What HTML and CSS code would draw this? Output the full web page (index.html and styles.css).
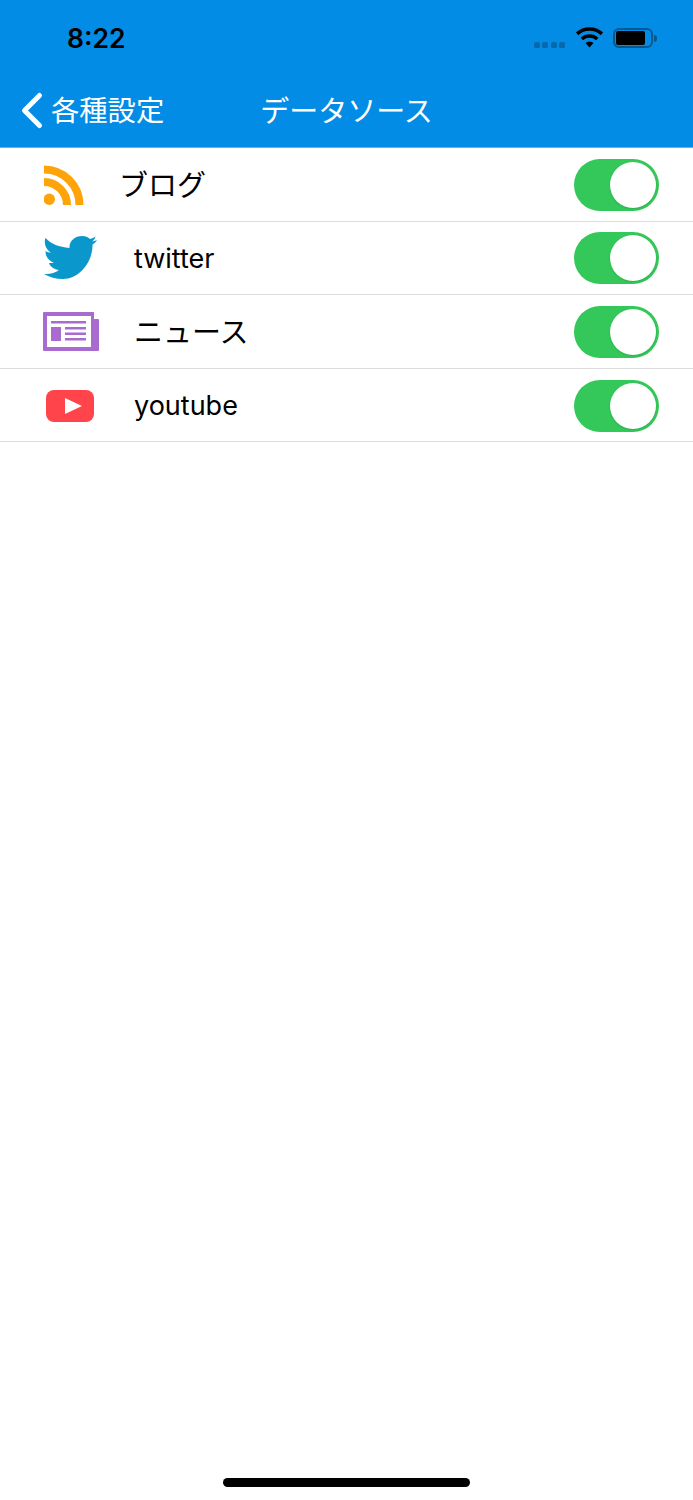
FILE: index.html
```html
<!DOCTYPE html>
<html>
	<head>
		<meta charset="utf-8">
		<title>データソース</title>
		<link rel="stylesheet" href="styles.css">
	</head>
	<body>
		<div class="header">
			<div class="status">
				<span class="time">8:22</span>
				<div class="status-icons">
					<div class="signal"><i></i><i></i><i></i><i></i></div>
					<svg class="wifi" width="27" height="21" viewBox="0 0 27 21">
						<path d="M1.100 6.800 A18.500 18.500 0 0 1 25.900 6.800 M5.800 12 A11.500 11.500 0 0 1 21.200 12" fill="none" stroke="#000" stroke-width="3.600"/>
						<path d="M13.500 20.500 L9.500 16 A6 6 0 0 1 17.500 16 Z" fill="#000"/>
					</svg>
					<div class="battery"><div class="battery-fill"></div></div>
					<div class="battery-cap"></div>
				</div>
			</div>
			<div class="navbar">
				<svg class="chevron" width="24" height="41" viewBox="0 0 24 41">
					<path d="M19.500 5.500 L4.500 20.500 L19.500 35.500" fill="none" stroke="#fff" stroke-width="5" stroke-linecap="round" stroke-linejoin="round"/>
				</svg>
				<span class="back">各種設定</span>
				<span class="title">データソース</span>
			</div>
		</div>
		<div class="list">
			<div class="row">
				<div class="icon icon-rss">
					<svg width="40" height="40" viewBox="0 0 40 40">
						<circle cx="5.300" cy="34.300" r="5.700" fill="#ffa30a"/>
						<path d="M0 17 A23 23 0 0 1 23 40 M0 4.500 A35.500 35.500 0 0 1 35.500 40" fill="none" stroke="#ffa30a" stroke-width="8"/>
					</svg>
				</div>
				<span class="label label-ja label-blog">ブログ</span>
				<div class="switch"><div class="knob"></div></div>
			</div>
			<div class="row">
				<div class="icon icon-bird">
					<svg width="54" height="44" viewBox="0 0 54 44">
						<path d="M1.500 2 C7 8 15 11 25.500 12 C25 5 31 0 38 0 C41.500 0 44 1.200 46 3 C48 2.500 50 1.500 51.500 0.500 C51 3 49.500 4.500 48 5.500 C49.500 5.300 51.500 4.800 53 4 C52 6 50 7.500 48.500 8.500 C49 25 36 43 19 43 C12 43 5 41 0 38 C6 38.500 11 37 15 34 C10 33.500 6.500 31 5 27 C7 27.300 8.500 27 10 26.700 C5 25 1.500 21 1.500 15 C3 16 5 16.500 7 16.700 C2 13.500 -0.500 7 1.500 2 Z" fill="#0a97cb"/>
					</svg>
				</div>
				<span class="label">twitter</span>
				<div class="switch"><div class="knob"></div></div>
			</div>
			<div class="row">
				<div class="icon">
					<svg width="56" height="40" viewBox="0 0 56 40">
						<path d="M1 0 H51 V7 H55 Q56 7 56 8 V38 Q56 39 55 39 H1 Q0 39 0 38 V1 Q0 0 1 0 Z" fill="#a96bcf"/>
						<rect x="4" y="4" width="44" height="31" fill="#fff"/>
						<rect x="8" y="9" width="35" height="2.500" fill="#a96bcf"/>
						<rect x="8" y="15" width="10" height="14" fill="#a96bcf"/>
						<rect x="22" y="15" width="21" height="2.500" fill="#a96bcf"/>
						<rect x="22" y="20.500" width="21" height="2.500" fill="#a96bcf"/>
						<rect x="22" y="26" width="21" height="2.500" fill="#a96bcf"/>
					</svg>
				</div>
				<span class="label label-ja">ニュース</span>
				<div class="switch"><div class="knob"></div></div>
			</div>
			<div class="row">
				<div class="icon icon-yt">
					<svg width="48" height="32" viewBox="0 0 48 32">
						<rect width="48" height="32" rx="8" fill="#ff444c"/>
						<path d="M19 8 L36 16 L19 24 Z" fill="#fff"/>
					</svg>
				</div>
				<span class="label">youtube</span>
				<div class="switch"><div class="knob"></div></div>
			</div>
		</div>
		<div class="home-bar"></div>
	</body>
</html>
```

FILE: styles.css
```css
* {
	margin: 0;
	padding: 0;
	box-sizing: border-box;
}
html, body {
	width: 693px;
	height: 1500px;
	overflow: hidden;
	background: #fff;
}
body {
	position: relative;
	font-family: "Inter", "Noto Sans CJK JP", sans-serif;
}
.header {
	height: 148px;
	background: #028ce6;
	border-bottom: 1px solid #5ab4ee;
}
.status {
	height: 74px;
	display: flex;
	justify-content: space-between;
	align-items: center;
	padding: 2px 36px 0 67px;
}
.time {
	font-size: 26.500px;
	font-weight: 600;
	color: #000;
}
.status-icons {
	display: flex;
	align-items: center;
}
.signal {
	display: flex;
	gap: 2.300px;
	margin: 14px 11px 0 0;
}
.signal i {
	width: 6px;
	height: 6px;
	border-radius: 1.500px;
	background: #0669ad;
}
.wifi {
	margin: -1px 10px 0 0;
}
.battery {
	width: 40px;
	height: 20px;
	border: 2px solid #05598f;
	border-radius: 6px;
	padding: 1px;
}
.battery-fill {
	width: 29px;
	height: 14px;
	background: #000;
	border-radius: 2px;
}
.battery-cap {
	width: 3px;
	height: 7px;
	margin-left: 1px;
	background: #05598f;
	border-radius: 0 3px 3px 0;
}
.navbar {
	height: 72px;
	position: relative;
	display: flex;
	align-items: center;
	color: #fff;
	padding: 0 0 0 20px;
}
.chevron {
	margin-right: 7px;
}
.back {
	font-size: 28.300px;
	margin-bottom: 4px;
}
.title {
	position: absolute;
	left: 0;
	right: 0;
	top: 14px;
	text-align: center;
	font-size: 29px;
}
.row {
	height: 73.600px;
	display: flex;
	align-items: center;
	border-bottom: 1.500px solid #dcdcdc;
	padding: 1px 34px 0 0;
}
.icon {
	width: 134px;
	padding-left: 43px;
	display: flex;
	align-items: center;
}
.icon svg {
	filter: blur(0.4px);
}
.icon-rss {
	padding-left: 44px;
}
.icon-bird {
	padding-left: 44px;
}
.icon-yt {
	padding-left: 46px;
}
.label {
	flex: 1;
	font-size: 27px;
	color: #000;
}
.label-ja {
	font-size: 29px;
	margin-bottom: 3px;
}
.label-blog {
	margin-left: -15px;
}
.switch {
	width: 85px;
	height: 52px;
	border-radius: 26px;
	background: #34c759;
	position: relative;
}
.knob {
	position: absolute;
	right: 3px;
	top: 3px;
	width: 46px;
	height: 46px;
	border-radius: 50%;
	background: #fff;
	box-shadow: 0 1px 2px rgba(0, 0, 0, 0.12);
}
.home-bar {
	position: absolute;
	left: 223px;
	top: 1478px;
	width: 247px;
	height: 9px;
	border-radius: 5px;
	background: #000;
}
```
